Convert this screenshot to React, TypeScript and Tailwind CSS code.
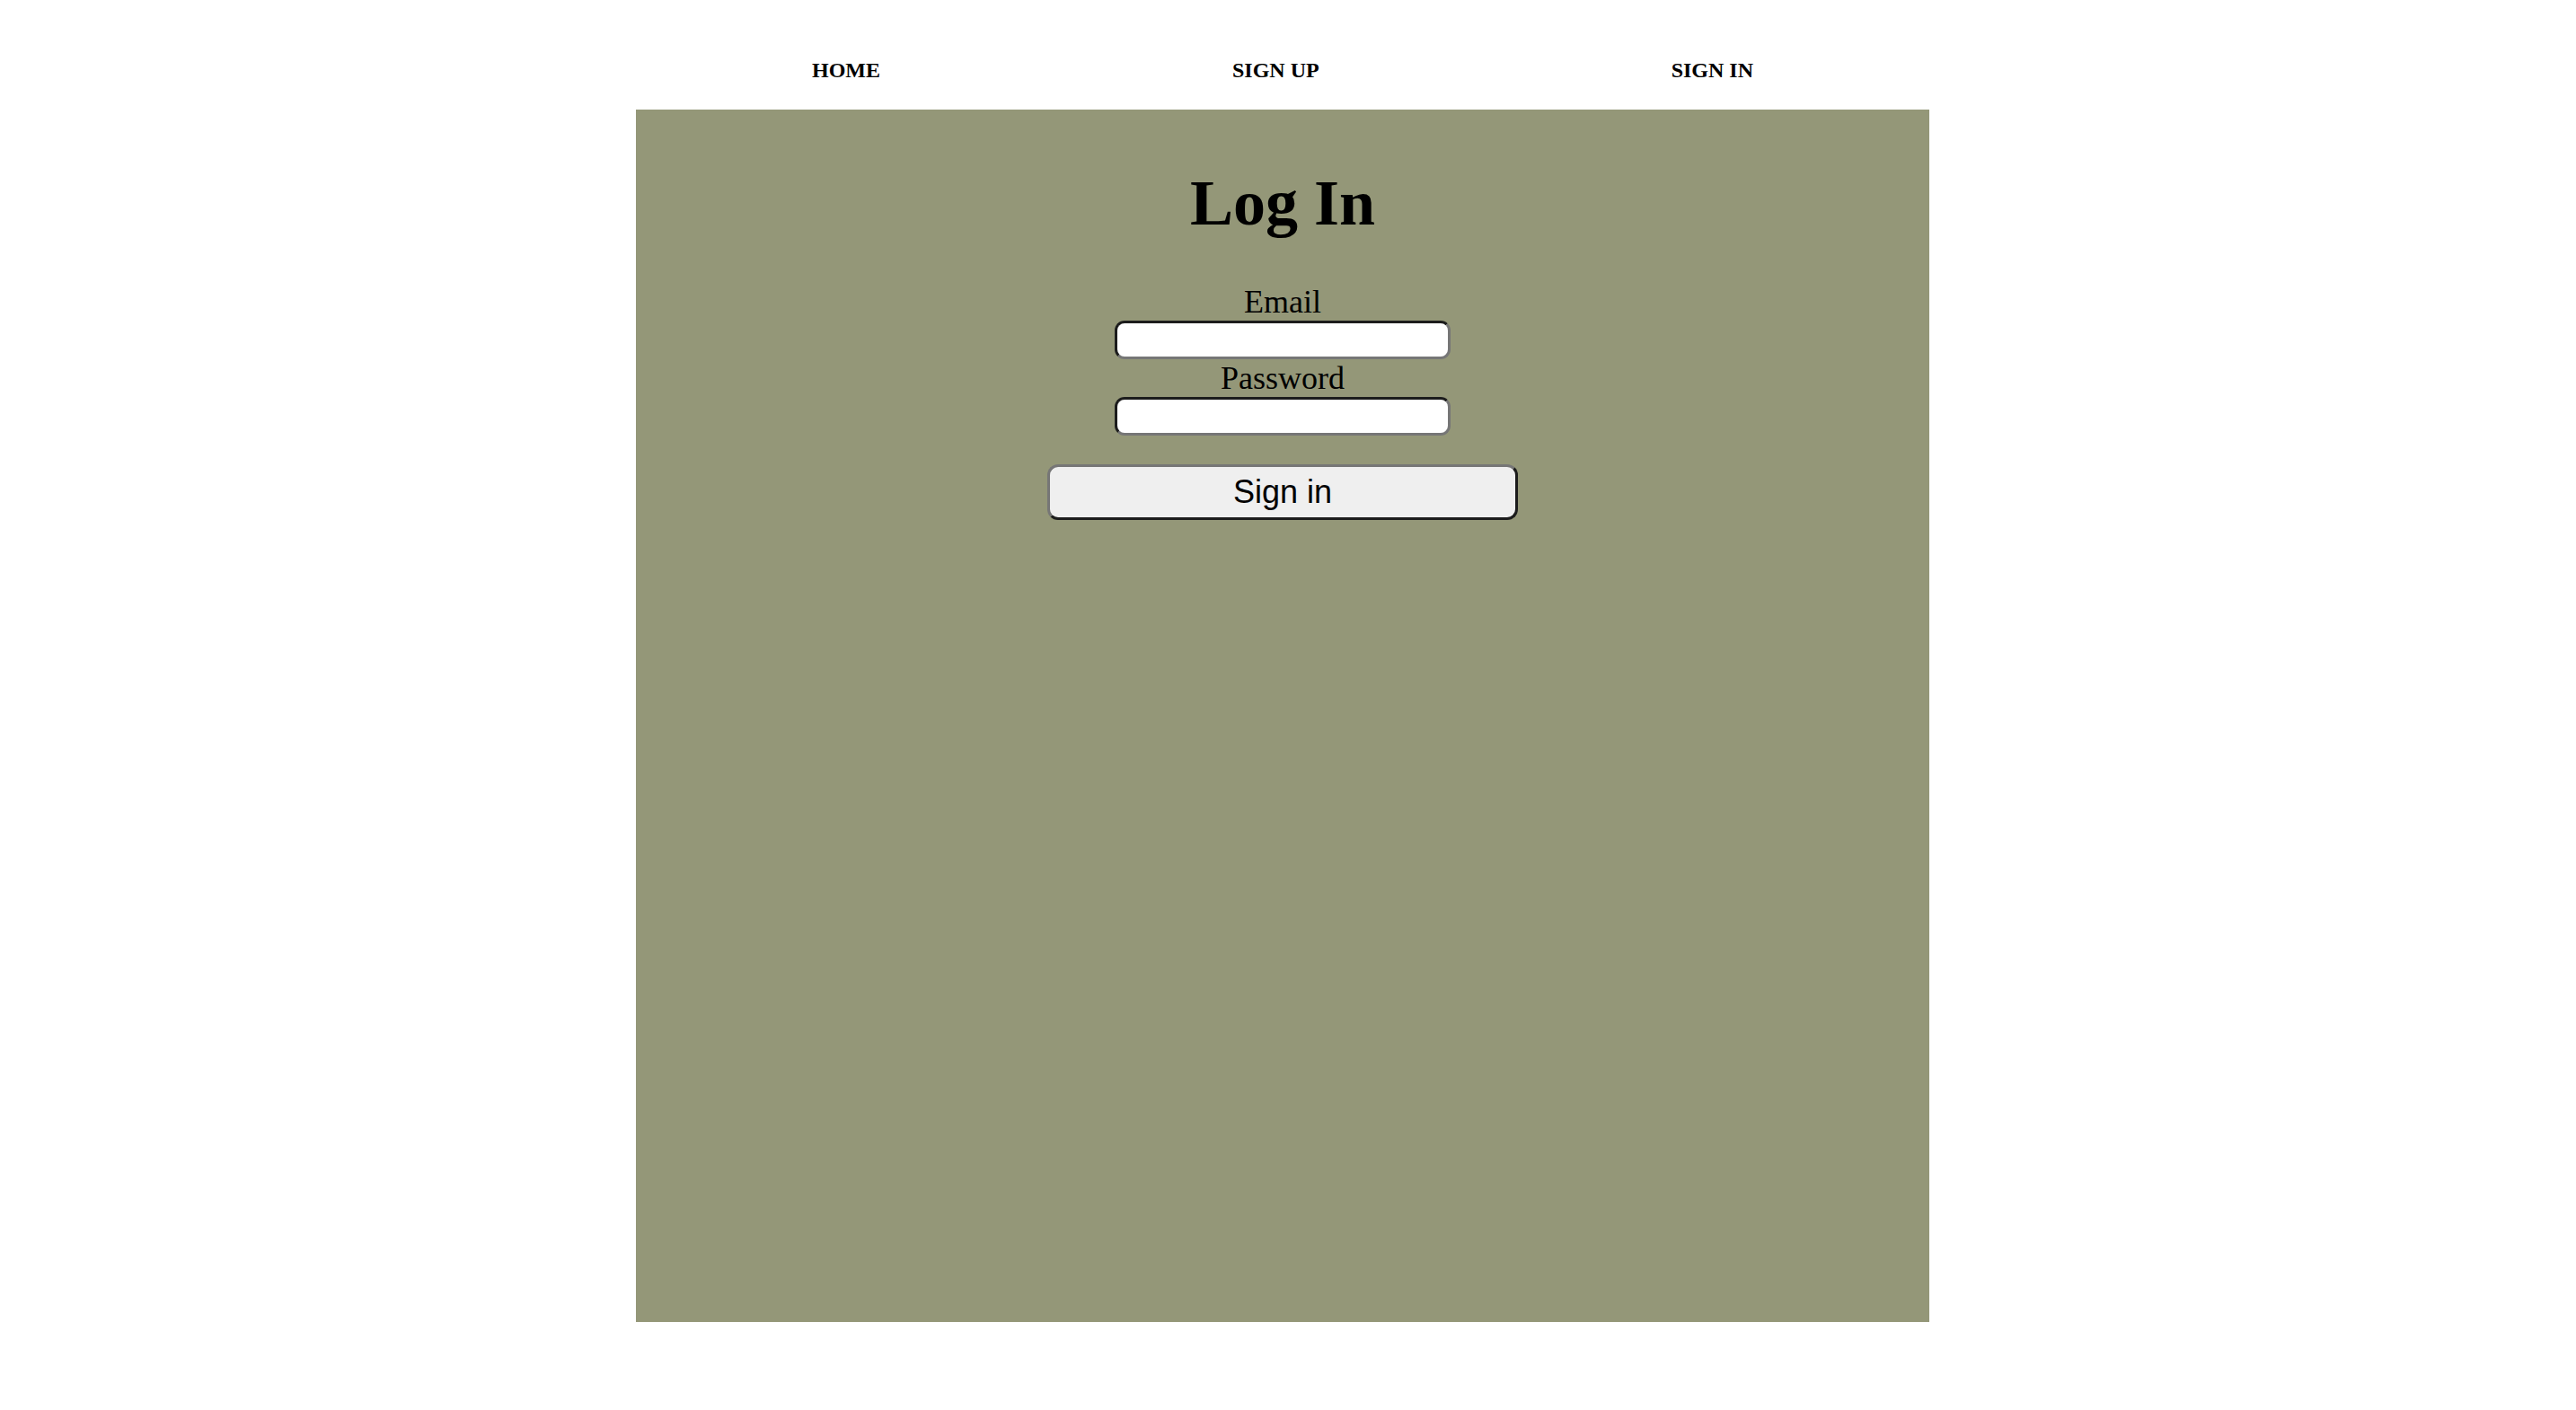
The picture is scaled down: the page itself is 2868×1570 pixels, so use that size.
import React from 'react'

const serif = { fontFamily: '"Liberation Serif", "Times New Roman", serif' }

function Nav() {
  return (
    <nav className="h-[122px] pt-[66px]">
      <ul className="flex justify-around text-[24px] font-bold leading-[24px] text-black">
        <li>
          <a href="#">HOME</a>
        </li>
        <li>
          <a href="#">SIGN UP</a>
        </li>
        <li>
          <a href="#">SIGN IN</a>
        </li>
      </ul>
    </nav>
  )
}

function Field({ label, type, first }: { label: string; type: string; first?: boolean }) {
  return (
    <div className={first ? 'flex flex-col items-center' : 'mt-[3px] flex flex-col items-center'}>
      <label className="text-[36px] leading-[36px] text-black">{label}</label>
      <input
        type={type}
        className="mt-[3px] h-[43px] w-[374px] rounded-[11px] border-[3px] border-t-[#1c1c1c] border-l-[#1c1c1c] border-r-[#767676] border-b-[#767676] bg-white px-2 outline-none"
      />
    </div>
  )
}

export default function App() {
  return (
    <div className="min-h-[1570px] bg-white" style={serif}>
      <div className="ml-[708px] w-[1440px]">
        <Nav />
        <main className="h-[1350px] bg-[#949778] pt-[68px]">
          <form className="flex flex-col items-center" onSubmit={(e) => e.preventDefault()}>
            <h1 className="text-[72px] font-bold leading-[72px] text-black">Log In</h1>
            <div className="mt-[56px] flex flex-col items-center">
              <Field label="Email" type="email" first />
              <Field label="Password" type="password" />
            </div>
            <button
              type="submit"
              className="mt-[32px] flex h-[62px] w-[524px] items-center justify-center rounded-[12px] border-[3px] border-t-[#767676] border-l-[#767676] border-r-[#1c1c1c] border-b-[#1c1c1c] bg-[#efefef] text-[36px] leading-[36px] text-black"
              style={{ fontFamily: '"Liberation Sans", Arial, sans-serif' }}
            >
              Sign in
            </button>
          </form>
        </main>
      </div>
    </div>
  )
}
